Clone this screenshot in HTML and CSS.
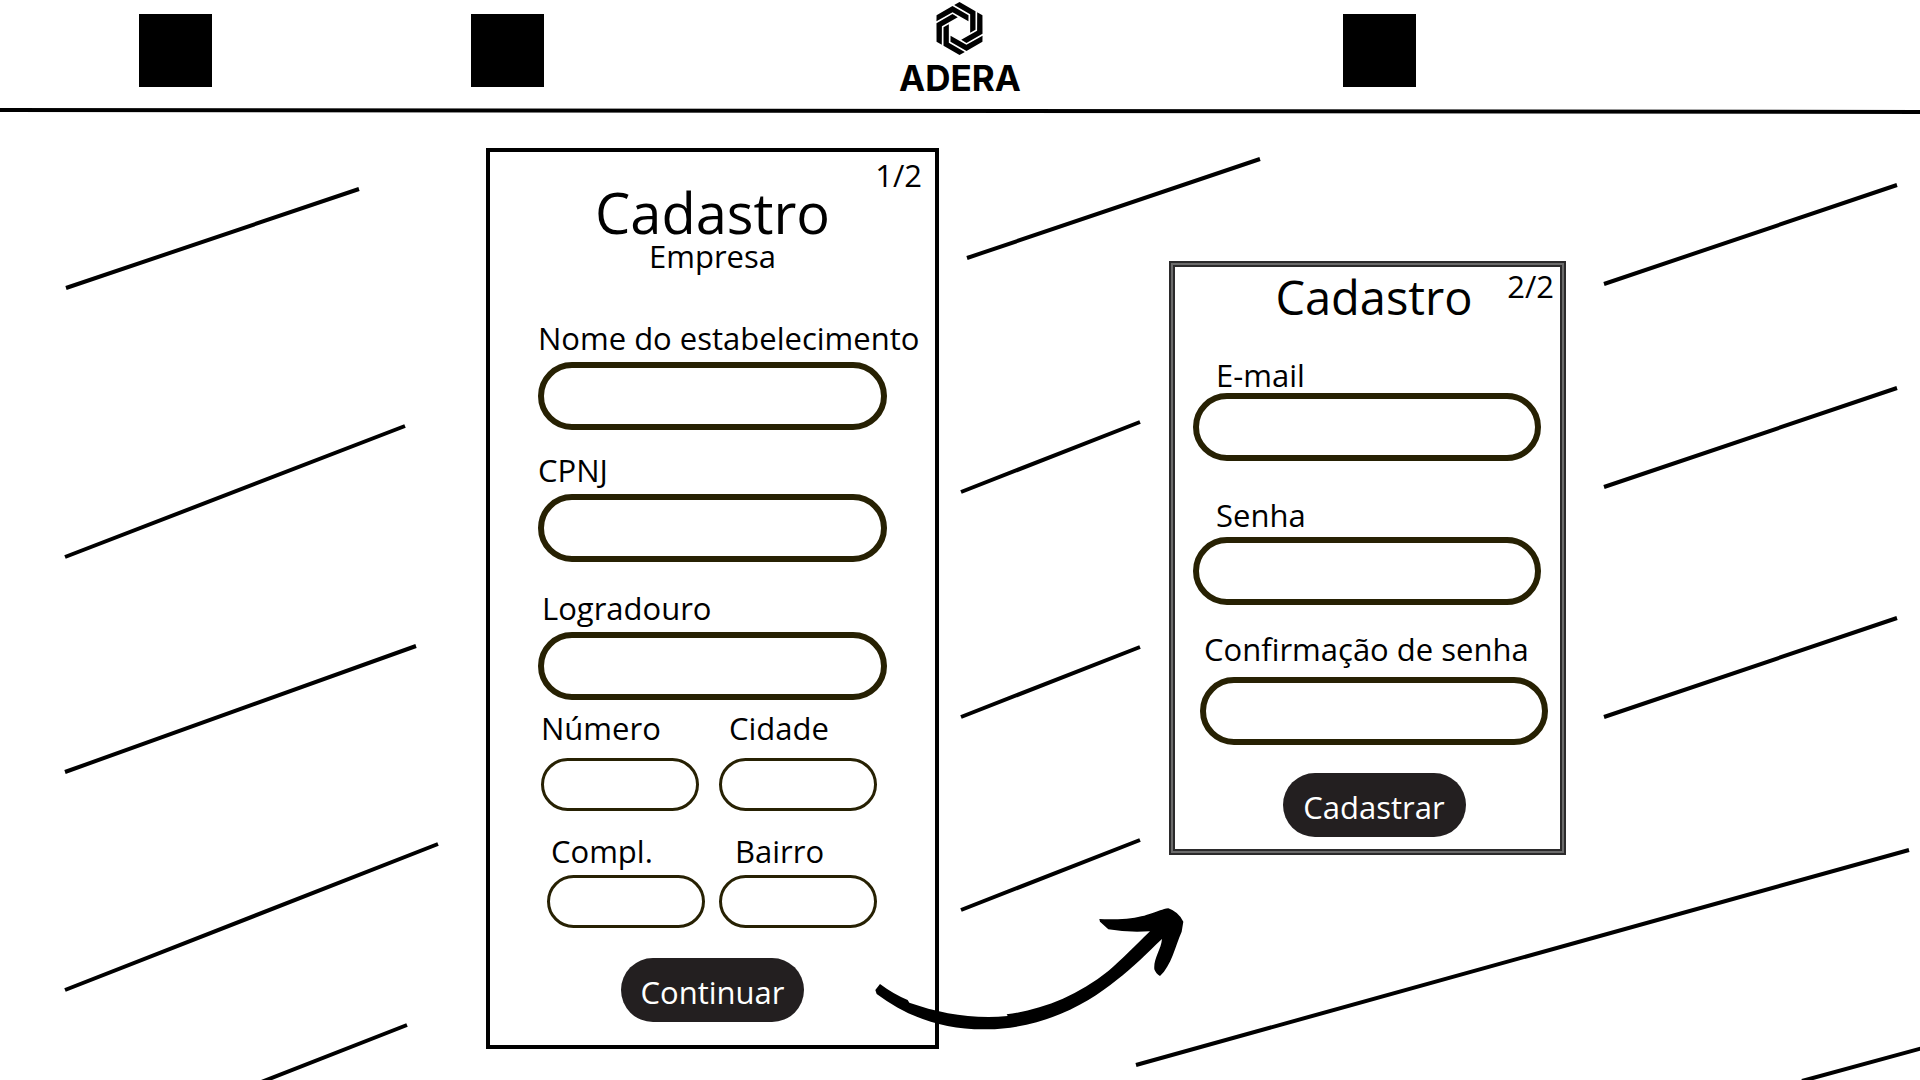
FILE: index.html
```html
<!DOCTYPE html>
<html lang="pt-BR">
<head>
<meta charset="utf-8">
<meta name="viewport" content="width=device-width, initial-scale=1">
<title>Adera - Cadastro</title>
<link rel="stylesheet" href="styles.css">
</head>
<body>
<header class="header">
  <span class="block"></span>
  <span class="block"></span>
  <a class="brand" href="#">
    <svg class="brand-icon" viewBox="170 7 141 159" aria-hidden="true">
      <defs><path id="blade" d="M224.500 16L240.500 7L288.500 34.500V90L272.500 99V44Z"/></defs>
      <use href="#blade"/>
      <use href="#blade" transform="rotate(60 240.500 86.500)"/>
      <use href="#blade" transform="rotate(120 240.500 86.500)"/>
      <use href="#blade" transform="rotate(180 240.500 86.500)"/>
      <use href="#blade" transform="rotate(240 240.500 86.500)"/>
      <use href="#blade" transform="rotate(300 240.500 86.500)"/>
    </svg>
    <span class="brand-name">ADERA</span>
  </a>
  <span class="block"></span>
</header>

<main class="board">
  <form class="card card-company">
    <span class="step">1/2</span>
    <h1 class="title">Cadastro</h1>
    <p class="subtitle">Empresa</p>
    <div class="field space-xl">
      <label for="nome">Nome do estabelecimento</label>
      <input id="nome" type="text">
    </div>
    <div class="field space-s">
      <label for="cnpj">CPNJ</label>
      <input id="cnpj" type="text">
    </div>
    <div class="field indent-xs space-m">
      <label for="logradouro">Logradouro</label>
      <input id="logradouro" type="text">
    </div>
    <div class="row row-wide space-xs">
      <div class="field small loose">
        <label for="numero">Número</label>
        <input id="numero" type="text">
      </div>
      <div class="field small loose indent-s">
        <label for="cidade">Cidade</label>
        <input id="cidade" type="text">
      </div>
    </div>
    <div class="row space-s">
      <div class="field small indent-xs">
        <label for="compl">Compl.</label>
        <input id="compl" type="text">
      </div>
      <div class="field small indent-m">
        <label for="bairro">Bairro</label>
        <input id="bairro" type="text">
      </div>
    </div>
    <button class="button" type="button">Continuar</button>
  </form>

  <form class="card card-access">
    <span class="step">2/2</span>
    <h2 class="title">Cadastro</h2>
    <div class="field tight indent-l space-l">
      <label for="email">E-mail</label>
      <input id="email" type="email">
    </div>
    <div class="field indent-l space-l">
      <label for="senha">Senha</label>
      <input id="senha" type="password">
    </div>
    <div class="field loose shifted indent-xs space-m">
      <label for="confirma">Confirmação de senha</label>
      <input id="confirma" type="password">
    </div>
    <button class="button" type="button">Cadastrar</button>
  </form>
</main>

<svg class="strokes" viewBox="0 0 1920 1080" preserveAspectRatio="xMidYMin slice" aria-hidden="true">
  <g stroke="#000" stroke-width="4">
    <path d="M0 110L1920 112"/>
    <path d="M66 288L359 189M65 557L405 426M65 772L416 646M65 990L438 844M126 1135L407 1025"/>
    <path d="M967 258L1260 159M961 492L1140 422M961 717L1140 647M961 910L1140 840"/>
    <path d="M1604 284L1897 185M1604 487L1897 388M1604 717L1897 618"/>
    <path d="M1136 1065L1909 850M1802 1081L1930 1046"/>
  </g>
  <path transform="translate(860 890) scale(.33333)" d="M60 282L46 300L50 312C140 380 250 420 380 418C560 415 690 335 770 270C820 232 860 190 906 147C903 180 880 205 883 238Q888 252 900 258C935 225 945 170 965 125L970 95Q955 65 925 55C890 60 870 80 800 86Q755 89 718 87L720 95L745 118Q800 128 870 124C820 172 790 205 745 243C650 320 540 360 440 373L443 378C340 388 240 370 148 338L143 330Q100 312 60 282Z"/>
</svg>
</body>
</html>
```
FILE: styles.css
```css
* {
  box-sizing: border-box;
}

body {
  position: relative;
  margin: 0;
  min-height: 100vh;
  overflow-x: hidden;
  background: #fff;
  color: #000;
  font-family: "Open Sans", "Noto Sans", sans-serif;
  font-size: 31px;
  line-height: 40px;
}

.header {
  display: grid;
  grid-template-columns: 139fr 332fr 428fr 444fr 577fr;
  height: 112px;
}

.block {
  width: 73px;
  height: 73px;
  margin-top: 14px;
  background: #000;
}

.block:first-child {
  grid-column: 2;
}

.brand {
  display: flex;
  flex-direction: column;
  align-items: center;
  justify-self: start;
  padding-top: 2px;
  color: #000;
  text-decoration: none;
}

.brand-icon {
  width: 47px;
  height: 53px;
}

.brand-name {
  font-family: Inter, sans-serif;
  font-size: 35px;
  font-weight: 700;
  line-height: 46px;
}

.board {
  display: grid;
  grid-template-columns:
    minmax(0, 486fr) minmax(0, 453fr) minmax(0, 230fr)
    minmax(0, 397fr) minmax(0, 354fr);
  align-items: start;
}

.card {
  position: relative;
  display: flex;
  flex-direction: column;
  background: #fff;
}

.card-company {
  grid-column: 2;
  margin: 36px 0 31px;
  padding: 36px 48px 23px;
  border: 4px solid #000;
}

.card-access {
  grid-column: 4;
  margin-top: 149px;
  padding: 6px 5px 12px 18px;
  border: 6px double #2b2a2b;
  background: linear-gradient(#fff, #fff) padding-box, #6b6b6b border-box;
}

.title {
  margin: 0;
  font-size: 56px;
  font-weight: 400;
  line-height: 48px;
  text-align: center;
}

.card-access .title {
  font-size: 47px;
}

.subtitle {
  margin: 0;
  text-align: center;
}

.step {
  position: absolute;
  top: 3px;
  right: 13px;
}

.card-access .step {
  top: -1px;
  right: 6px;
}

.field {
  display: flex;
  flex-direction: column;
  gap: 4px;
  white-space: nowrap;
}

.card-access .field {
  width: 348px;
  line-height: 36px;
}

.field.tight {
  gap: 0;
}

.field.loose {
  gap: 10px;
}

.card-access .shifted {
  align-self: flex-end;
  margin-right: 7px;
}

.field input {
  width: 100%;
  height: 68px;
  padding: 0 28px;
  border: 6px solid #272103;
  border-radius: 34px;
  outline: 0;
  background: #fff;
  font: inherit;
}

.field.small {
  width: 158px;
}

.field.small input {
  height: 53px;
  padding: 0 20px;
  border-width: 3px;
}

.indent-xs label {
  padding-left: 4px;
}

.indent-s label {
  padding-left: 10px;
}

.indent-m label {
  padding-left: 16px;
}

.indent-l label {
  padding-left: 23px;
}

.row {
  display: flex;
  justify-content: flex-end;
  gap: 14px;
  padding-right: 10px;
}

.row-wide {
  gap: 20px;
}

.space-xs {
  margin-top: 8px;
}

.space-s {
  margin-top: 20px;
}

.space-m {
  margin-top: 26px;
}

.space-l {
  margin-top: 36px;
}

.space-xl {
  margin-top: 42px;
}

.button {
  align-self: center;
  width: 183px;
  height: 64px;
  margin-top: 28px;
  padding: 4px 0 0;
  border: 0;
  border-radius: 32px;
  background: #231f20;
  color: #fff;
  font: inherit;
}

.card-company .button {
  margin-top: 30px;
}

.strokes {
  position: absolute;
  inset: 0;
  width: 100%;
  height: 100%;
  fill: #000;
  pointer-events: none;
}
```
